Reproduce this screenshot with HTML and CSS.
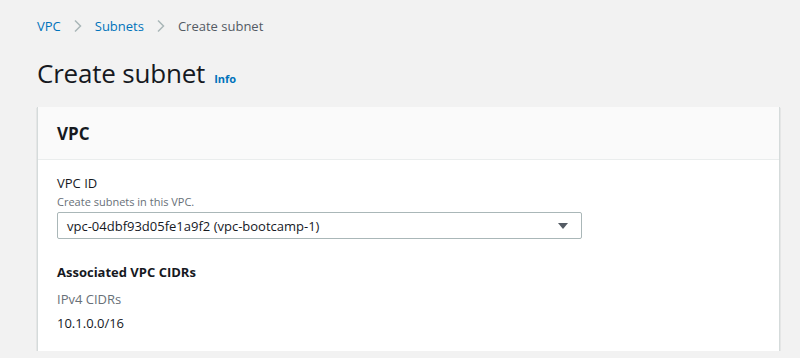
FILE: index.html
```html
<!DOCTYPE html>
<html lang="en">
<head>
  <meta charset="UTF-8" />
  <title>Create subnet</title>
  <link rel="stylesheet" href="styles.css">
</head>
<body>
  <!-- Breadcrumbs -->
  <nav class="breadcrumbs">
    <a href="#">VPC</a>
    <svg class="crumb-sep" width="16" height="16" viewBox="0 0 16 16"><path d="M5 2.5l5.5 5.5L5 13.5" fill="none" stroke="#aab7b8" stroke-width="1.5"/></svg>
    <a href="#">Subnets</a>
    <svg class="crumb-sep" width="16" height="16" viewBox="0 0 16 16"><path d="M5 2.5l5.5 5.5L5 13.5" fill="none" stroke="#aab7b8" stroke-width="1.5"/></svg>
    <span class="crumb-current">Create subnet</span>
  </nav>

  <!-- Page header -->
  <header class="page-header">
    <h1>Create subnet</h1>
    <a href="#" class="info-link">Info</a>
  </header>

  <!-- VPC container -->
  <section class="card">
    <div class="card-header">
      <h2>VPC</h2>
    </div>
    <div class="card-body">
      <div class="field">
        <label class="field-label">VPC ID</label>
        <div class="field-desc">Create subnets in this VPC.</div>
        <div class="select">
          <span>vpc-04dbf93d05fe1a9f2 (vpc-bootcamp-1)</span>
          <svg width="12" height="8" viewBox="0 0 12 8"><path d="M1 1h10L6 7z" fill="#545b64"/></svg>
        </div>
      </div>

      <h3 class="sub-title">Associated VPC CIDRs</h3>
      <div class="kv-label">IPv4 CIDRs</div>
      <div class="kv-value">10.1.0.0/16</div>
    </div>
  </section>
</body>
</html>
```

FILE: styles.css
```css
* {
  margin: 0;
  padding: 0;
  box-sizing: border-box;
}

body {
  font-family: 'Open Sans', 'Noto Sans', sans-serif;
  background: #f2f2f2;
  color: #16191f;
  font-size: 13px;
  padding: 0 20px 0 37px;
}

/* Breadcrumbs */
.breadcrumbs {
  display: flex;
  align-items: center;
  height: 20px;
  margin-top: 16px;
  font-size: 13px;
}

.breadcrumbs a {
  color: #0073bb;
  text-decoration: none;
}

.crumb-sep {
  margin: 0 9px;
}

.crumb-current {
  color: #545b64;
}

/* Page header */
.page-header {
  display: flex;
  align-items: baseline;
  margin-top: 17px;
  height: 54px;
}

.page-header h1 {
  font-size: 26px;
  font-weight: 400;
  line-height: 40px;
  letter-spacing: -0.2px;
  color: #16191f;
}

.info-link {
  margin-left: 9px;
  font-size: 11px;
  font-weight: 700;
  color: #0073bb;
  text-decoration: none;
}

/* Card */
.card {
  width: 743px;
  background: #fff;
  border-left: 1px solid #d5dbdb;
  border-right: 1px solid #d5dbdb;
  box-shadow: 0 1px 1px 0 rgba(0, 28, 36, 0.3);
}

.card-header {
  background: #fafafa;
  border-bottom: 1px solid #eaeded;
  height: 53px;
  padding: 0 19px;
  display: flex;
  align-items: center;
}

.card-header h2 {
  font-size: 17px;
  font-weight: 700;
}

.card-body {
  padding: 12px 19px 17px;
}

.field-label {
  display: block;
  line-height: 22px;
}

.field-desc {
  font-size: 11px;
  color: #687078;
  line-height: 15px;
}

.select {
  margin-top: 3px;
  width: 525px;
  height: 27px;
  border: 1px solid #aab7b8;
  border-radius: 2px;
  display: flex;
  align-items: center;
  justify-content: space-between;
  padding: 0 12px 0 9px;
}

.sub-title {
  font-size: 13px;
  font-weight: 700;
  margin-top: 22px;
  line-height: 22px;
}

.kv-label {
  color: #687078;
  margin-top: 5px;
  line-height: 22px;
}

.kv-value {
  line-height: 22px;
  margin-top: 2px;
}
```
